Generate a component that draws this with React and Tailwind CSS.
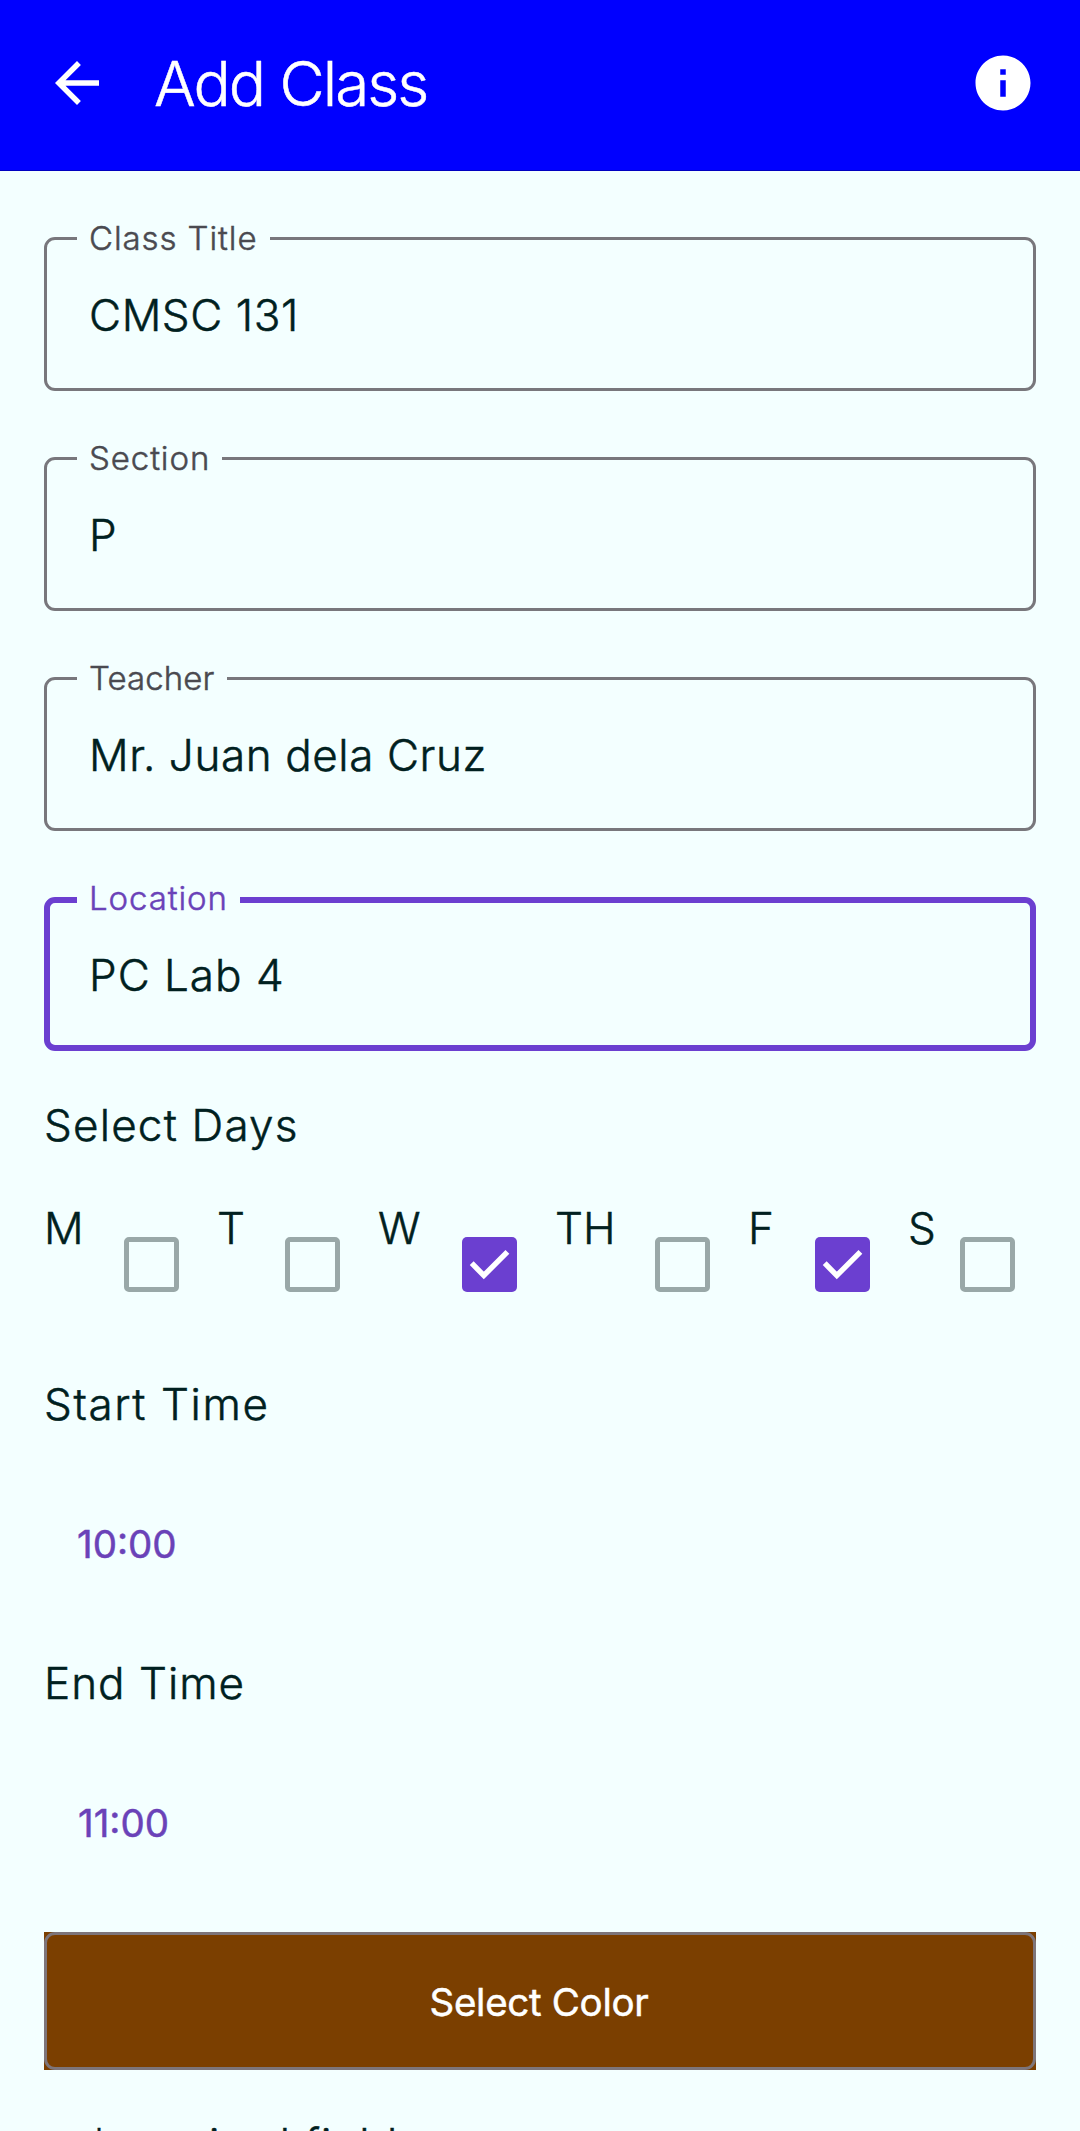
import React from "react";
import { MdArrowBack, MdInfo } from "react-icons/md";

function Field({ label, value, focused, legendClass, valueClass }) {
  return (
    <fieldset
      className={
        focused
          ? "h-[169px] rounded-[11px] border-[6px] border-[#6b3fd0] pl-[39px]"
          : "h-[169px] rounded-[11px] border-[3px] border-[#78777c] pl-[42px]"
      }
    >
      <legend
        className={`-ml-3 pl-3 text-[33px] leading-[33px] whitespace-nowrap ${
          focused ? "pb-[3px] text-[#6a42b8]" : "text-[#4a4a50]"
        } ${legendClass}`}
      >
        {label}
      </legend>
      <div className={`leading-[60px] ${focused ? "mt-[27px]" : "mt-[30px]"} ${valueClass}`}>{value}</div>
    </fieldset>
  );
}

function Checkbox({ checked }) {
  return checked ? (
    <span className="mt-[39px] block size-[55px] rounded-[5px] bg-[#6b3fd0]">
      <svg viewBox="0 0 55 55" className="size-full" fill="none" stroke="white" strokeWidth="5.4">
        <path d="M9.7 26.2 21.8 38.5 45.4 14.8" />
      </svg>
    </span>
  ) : (
    <span className="mt-[39px] block size-[55px] rounded-[5px] border-[5px] border-[#99a8a8]" />
  );
}

const days = [
  { name: "M", width: "w-20", checked: false },
  { name: "T", width: "w-[68px]", checked: false },
  { name: "W", width: "w-[84px]", checked: true },
  { name: "TH", width: "w-[100px]", checked: false },
  { name: "F", width: "w-[67px]", checked: true },
  { name: "S", width: "w-[52px]", checked: false },
];

export default function App() {
  return (
    <div className="h-[2131px] w-[1080px] overflow-hidden bg-[#f3ffff] font-['Inter',sans-serif] text-[44px] font-light text-[#002020] [-webkit-text-stroke:0.5px]">
      <header className="flex h-[171px] items-start border-b border-[#0000c0] bg-[#0000ff] pt-[50px] pr-11 pl-11 text-white">
        <MdArrowBack className="size-[66px]" stroke="none" />
        <h1 className="mt-px ml-[44px] grow text-[62px] leading-[66px] tracking-[-2px] [-webkit-text-stroke:0.5px]">Add Class</h1>
        <MdInfo className="size-[66px]" stroke="none" />
      </header>

      <main className="px-11 pt-[51px]">
        <div className="flex flex-col gap-[51px]">
          <Field label="Class Title" value="CMSC 131" legendClass="w-[193px] tracking-[0.9px]" valueClass="tracking-[0.6px]" />
          <Field label="Section" value="P" legendClass="w-[145px] tracking-[0.9px]" valueClass="" />
          <Field label="Teacher" value="Mr. Juan dela Cruz" legendClass="w-[150px] tracking-[0.1px]" valueClass="tracking-[0.6px]" />
          <Field focused label="Location" value="PC Lab 4" legendClass="w-[163px] tracking-[0.9px]" valueClass="tracking-[1px]" />
        </div>

        <h2 className="mt-11 leading-[60px] tracking-[1.2px]">Select Days</h2>
        <div className="mt-[43px] flex gap-[38px]">
          {days.map((d) => (
            <label key={d.name} className="flex">
              <span className={`${d.width} leading-[60px]`}>{d.name}</span>
              <Checkbox checked={d.checked} />
            </label>
          ))}
        </div>

        <h2 className="mt-[82px] leading-[60px] tracking-[1.6px]">Start Time</h2>
        <div className="mt-20 pl-[33px] text-[38.5px] leading-[60px] font-normal text-[#6a42b8]">10:00</div>
        <h2 className="mt-[79px] leading-[60px] tracking-[1px]">End Time</h2>
        <div className="mt-20 pl-[34px] text-[38.5px] leading-[60px] font-normal text-[#6a42b8]">11:00</div>

        <button className="mt-[79px] block h-[138px] w-full bg-[#7b3f00]">
          <span className="flex size-full items-center justify-center rounded-[11px] border-[3px] border-[#7d757a] pt-[3px] pr-[2px] text-[38.5px] font-normal tracking-[-0.3px] text-white">
            Select Color
          </span>
        </button>
        <p className="mt-11 pl-11 leading-[60px] tracking-[1.2px]">*required fields</p>
      </main>
    </div>
  );
}
